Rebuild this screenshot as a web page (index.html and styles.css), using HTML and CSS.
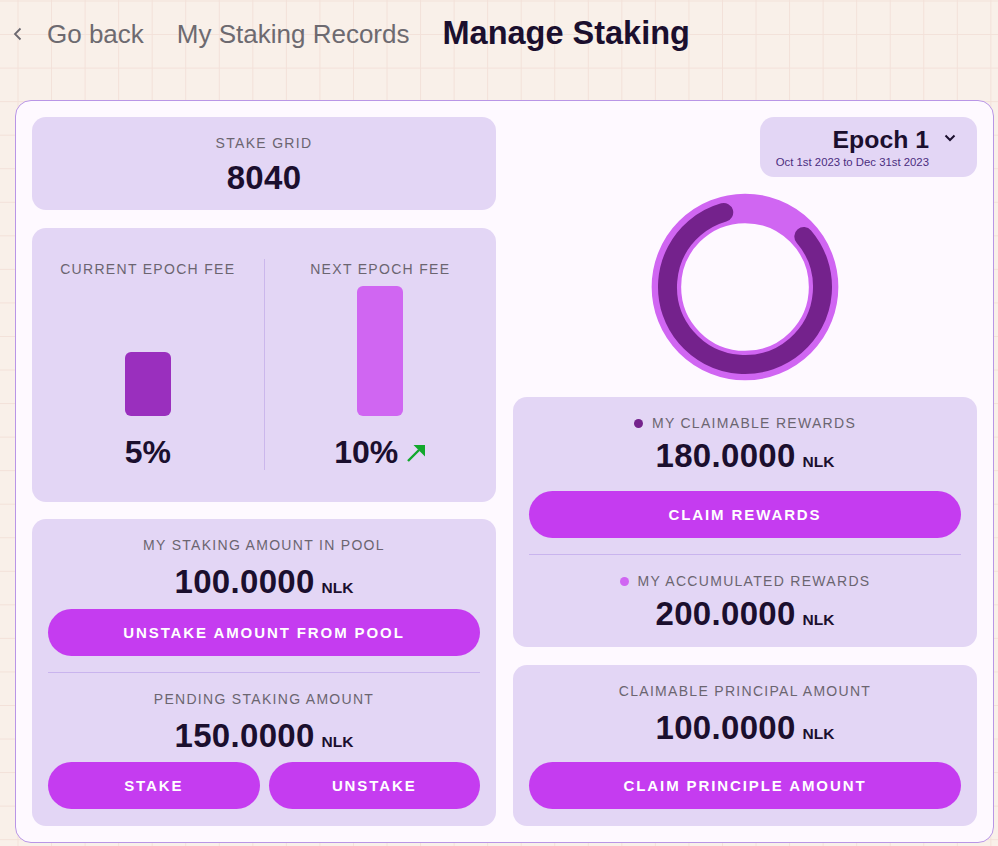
FILE: index.html
```html
<!DOCTYPE html>
<html lang="en">
<head>
<meta charset="utf-8">
<title>Manage Staking</title>
<link rel="stylesheet" href="styles.css">
</head>
<body>
<header class="topbar">
  <svg class="back-icon" width="10" height="14" viewBox="0 0 10 14"><polyline points="7.5,1.5 2,7 7.5,12.5" fill="none" stroke="#6b6870" stroke-width="1.8"/></svg>
  <span class="crumb crumb-back">Go back</span>
  <span class="crumb">My Staking Records</span>
  <h1 class="page-title">Manage Staking</h1>
</header>

<main class="panel">
  <section class="col">
    <div class="card card-grid">
      <div class="label">STAKE GRID</div>
      <div class="value value-tight">8040</div>
    </div>

    <div class="card card-fee">
      <div class="fee-col">
        <div class="label">CURRENT EPOCH FEE</div>
        <div class="bar-area"><div class="bar bar-current"></div></div>
        <div class="fee-value">5%</div>
      </div>
      <div class="fee-divider"></div>
      <div class="fee-col">
        <div class="label">NEXT EPOCH FEE</div>
        <div class="bar-area"><div class="bar bar-next"></div></div>
        <div class="fee-value">10%<svg class="up-arrow" width="20" height="19" viewBox="0 0 20 19"><line x1="2" y1="17" x2="13" y2="6" stroke="#12a82c" stroke-width="2.4"/><polygon points="7.5,1 19,1 19,12.5" fill="#12a82c"/></svg></div>
      </div>
    </div>

    <div class="card card-stake">
      <div class="label">MY STAKING AMOUNT IN POOL</div>
      <div class="value">100.0000<span class="unit">NLK</span></div>
      <button class="btn btn-gap9">UNSTAKE AMOUNT FROM POOL</button>
      <div class="divider"></div>
      <div class="label">PENDING STAKING AMOUNT</div>
      <div class="value">150.0000<span class="unit">NLK</span></div>
      <div class="btn-row">
        <button class="btn">STAKE</button>
        <button class="btn">UNSTAKE</button>
      </div>
    </div>
  </section>

  <section class="col">
    <div class="epoch">
      <div class="epoch-text">
        <div class="epoch-title">Epoch 1</div>
        <div class="epoch-range">Oct 1st 2023 to Dec 31st 2023</div>
      </div>
      <svg class="epoch-chevron" width="12" height="8" viewBox="0 0 12 8"><polyline points="1.5,1.5 6,6 10.5,1.5" fill="none" stroke="#1b0f2e" stroke-width="2"/></svg>
    </div>

    <div class="donut-wrap">
      <svg class="donut" width="188" height="188" viewBox="0 0 188 188">
        <circle cx="94" cy="94" r="78.6" fill="none" stroke="#d066f2" stroke-width="29.5"/>
        <circle cx="94" cy="94" r="77.5" fill="none" stroke="#74228c" stroke-width="19" stroke-linecap="round" stroke-dasharray="398 1000" transform="rotate(-40.6 94 94)"/>
      </svg>
    </div>

    <div class="card card-rewards">
      <div class="label"><span class="dot dot-dark"></span>MY CLAIMABLE REWARDS</div>
      <div class="value value-near">180.0000<span class="unit">NLK</span></div>
      <button class="btn btn-gap17">CLAIM REWARDS</button>
      <div class="divider"></div>
      <div class="label"><span class="dot dot-light"></span>MY ACCUMULATED REWARDS</div>
      <div class="value value-near">200.0000<span class="unit">NLK</span></div>
    </div>

    <div class="card card-principal">
      <div class="label">CLAIMABLE PRINCIPAL AMOUNT</div>
      <div class="value">100.0000<span class="unit">NLK</span></div>
      <button class="btn btn-gap16">CLAIM PRINCIPLE AMOUNT</button>
    </div>
  </section>
</main>
</body>
</html>
```

FILE: styles.css
```css
* { box-sizing: border-box; }

html, body {
  margin: 0;
  padding: 0;
}

body {
  width: 998px;
  height: 846px;
  overflow: hidden;
  font-family: "Liberation Sans", Arial, sans-serif;
  color: #1b0f2e;
  background-color: #f9f0e9;
  background-image:
    linear-gradient(to right, #f3e1d9 1px, transparent 1px),
    linear-gradient(to bottom, #f3e1d9 1px, transparent 1px);
  background-size: 33.56px 33.56px;
  background-position: 17.5px 0.5px;
}

.topbar {
  display: flex;
  align-items: center;
  height: 40px;
  margin-top: 14px;
  padding-left: 13px;
}

.back-icon {
  display: block;
  margin-right: 24px;
}

.crumb {
  font-size: 26px;
  line-height: 40px;
  color: #6d6a70;
  margin-right: 33px;
}

.page-title {
  margin: 0;
  font-size: 32.5px;
  line-height: 40px;
  font-weight: 700;
  color: #1b0f2e;
  position: relative;
  top: -1px;
}

.panel {
  margin: 46px 0 0 15px;
  width: 979px;
  height: 743px;
  background: #fef9ff;
  border: 1px solid #b996e6;
  border-radius: 16px;
  padding: 16px;
  display: grid;
  grid-template-columns: 464px 464px;
  column-gap: 17px;
}

.col {
  display: flex;
  flex-direction: column;
}

.col > * { flex-shrink: 0; }

.card {
  background: #e3d6f5;
  border-radius: 14px;
  display: flex;
  flex-direction: column;
  align-items: center;
}

.card > * { flex-shrink: 0; }

.label {
  display: flex;
  align-items: center;
  justify-content: center;
  font-size: 14px;
  line-height: 16px;
  height: 16px;
  letter-spacing: 1.3px;
  color: #6b6570;
  white-space: nowrap;
}

.value {
  margin-top: 11px;
  height: 36px;
  font-size: 33px;
  line-height: 36px;
  font-weight: 700;
  letter-spacing: 0.3px;
  color: #1b0f2e;
  white-space: nowrap;
}

.value-tight { margin-top: 9px; }
.value-near { margin-top: 7px; }

.unit {
  font-size: 15.5px;
  line-height: 1;
  letter-spacing: 0;
  margin-left: 7px;
}

.btn {
  display: block;
  width: 100%;
  height: 47px;
  border: none;
  border-radius: 24px;
  background: #c53cf0;
  color: #ffffff;
  font-family: "Liberation Sans", Arial, sans-serif;
  font-size: 15px;
  font-weight: 700;
  letter-spacing: 1.9px;
  padding: 0;
  cursor: pointer;
}

.btn-gap9 { margin-top: 9px; }
.btn-gap16 { margin-top: 16px; }
.btn-gap17 { margin-top: 17px; }

.btn-row {
  margin-top: 8px;
  width: 100%;
  display: grid;
  grid-template-columns: 1fr 1fr;
  column-gap: 9px;
}

.divider {
  width: 100%;
  height: 1px;
  background: #c9b4ee;
  margin: 16px 0 18px;
}

/* Stake grid */
.card-grid {
  height: 93px;
  padding-top: 18px;
}

/* Fee card */
.card-fee {
  margin-top: 18px;
  height: 274px;
  flex-direction: row;
  align-items: stretch;
  padding: 31px 0 32px;
}

.fee-col {
  flex: 1;
  display: flex;
  flex-direction: column;
  align-items: center;
  padding-top: 2px;
}

.fee-divider {
  width: 1px;
  background: #cbb7ec;
}

.bar-area {
  margin-top: 9px;
  height: 130px;
  display: flex;
  align-items: flex-end;
}

.bar {
  width: 46px;
  border-radius: 6px;
}

.bar-current {
  height: 64px;
  background: #9a2fbe;
}

.bar-next {
  height: 130px;
  background: #d066f2;
}

.fee-value {
  margin-top: 18px;
  font-size: 32px;
  line-height: 36px;
  font-weight: 700;
  display: flex;
  align-items: center;
  white-space: nowrap;
}

.up-arrow {
  display: block;
  margin-left: 8px;
  margin-top: 2px;
}

/* Staking card */
.card-stake {
  margin-top: 17px;
  height: 307px;
  padding: 18px 16px 17px;
}

/* Right column */
.epoch {
  align-self: flex-end;
  width: 217px;
  height: 60px;
  background: #e3d6f5;
  border-radius: 14px;
  display: flex;
  align-items: flex-start;
  padding: 9px 21px 8px 15px;
}

.epoch-text {
  flex: 1;
  text-align: right;
}

.epoch-title {
  font-size: 24.8px;
  line-height: 28px;
  font-weight: 700;
  color: #1b0f2e;
}

.epoch-range {
  margin-top: 1px;
  font-size: 11.35px;
  line-height: 14px;
  color: #4b2d80;
  white-space: nowrap;
}

.epoch-chevron {
  display: block;
  margin-left: 15px;
  margin-top: 8px;
}

.donut-wrap {
  margin-top: 16px;
  display: flex;
  justify-content: center;
}

.donut { display: block; }

.card-rewards {
  margin-top: 16px;
  height: 250px;
  padding: 18px 16px 16px;
}

.dot {
  width: 9px;
  height: 9px;
  border-radius: 50%;
  margin-right: 9px;
  flex: none;
}

.dot-dark { background: #74228c; }
.dot-light { background: #d066f2; }

.card-principal {
  margin-top: 18px;
  height: 161px;
  padding: 18px 16px 17px;
}
```
